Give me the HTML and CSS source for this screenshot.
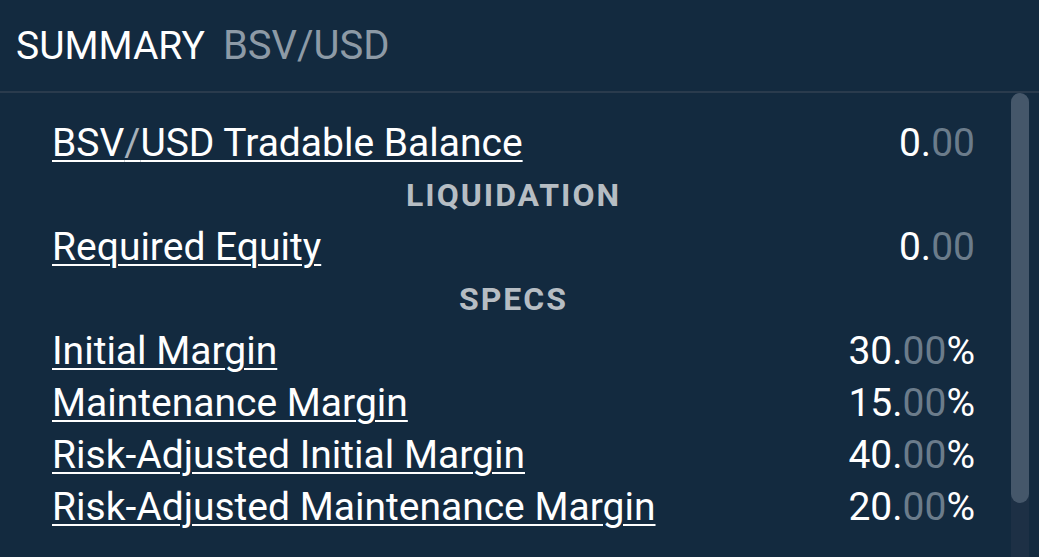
FILE: index.html
```html
<!DOCTYPE html>
<html>
<head>
<meta charset="utf-8">
<link rel="stylesheet" href="styles.css">
</head>
<body>
<div class="panel">
  <div class="header">
    <span class="title">SUMMARY</span>
    <span class="pair">BSV/USD</span>
  </div>
  <div class="body">
    <div class="content">
      <div class="row">
        <a class="label" href="#">BSV<span class="slash">/</span>USD Tradable Balance</a>
        <span class="value">0.<span class="dim">00</span></span>
      </div>
      <div class="section">LIQUIDATION</div>
      <div class="row">
        <a class="label" href="#">Required Equity</a>
        <span class="value">0.<span class="dim">00</span></span>
      </div>
      <div class="section">SPECS</div>
      <div class="row">
        <a class="label" href="#">Initial Margin</a>
        <span class="value">30.<span class="dim">00</span>%</span>
      </div>
      <div class="row">
        <a class="label" href="#">Maintenance Margin</a>
        <span class="value">15.<span class="dim">00</span>%</span>
      </div>
      <div class="row">
        <a class="label" href="#">Risk-Adjusted Initial Margin</a>
        <span class="value">40.<span class="dim">00</span>%</span>
      </div>
      <div class="row">
        <a class="label" href="#">Risk-Adjusted Maintenance Margin</a>
        <span class="value">20.<span class="dim">00</span>%</span>
      </div>
    </div>
    <div class="scrollbar"><div class="thumb"></div></div>
  </div>
</div>
</body>
</html>
```
FILE: styles.css
```css
html, body {
  margin: 0;
  padding: 0;
  background: #132a3f;
  width: 1039px;
  height: 557px;
  overflow: hidden;
}
.panel {
  font-family: Roboto, "Liberation Sans", sans-serif;
  color: #ffffff;
  height: 557px;
  display: flex;
  flex-direction: column;
}
.header {
  height: 91px;
  border-bottom: 2px solid #2a3b4d;
  display: flex;
  align-items: center;
  padding-left: 16px;
  font-size: 39px;
  box-sizing: content-box;
}
.title {
  color: #ffffff;
  margin-right: 18px;
}
.pair {
  color: #8d9aa6;
  font-size: 40px;
}
.body {
  flex: 1;
  display: flex;
  min-height: 0;
}
.content {
  flex: 1;
  padding: 24px 36px 0 52px;
}
.row {
  display: flex;
  justify-content: space-between;
  align-items: center;
  height: 52px;
  font-size: 39px;
}
.label {
  color: #ffffff;
  text-decoration: underline;
  text-decoration-thickness: 2px;
  text-underline-offset: 4px;
}
.slash {
  color: #a7b1ba;
}
.value {
  color: #ffffff;
}
.dim {
  color: #6b7c8b;
}
.section {
  height: 52px;
  display: flex;
  align-items: center;
  justify-content: center;
  font-size: 32px;
  font-weight: 700;
  letter-spacing: 2px;
  color: #b6bdc3;
}
.scrollbar {
  width: 18px;
  margin-right: 10px;
  background: #1d3045;
  border-radius: 9px 9px 0 0;
  display: flex;
  flex-direction: column;
}
.thumb {
  height: 410px;
  background: #45576a;
  border-radius: 9px;
}
```
